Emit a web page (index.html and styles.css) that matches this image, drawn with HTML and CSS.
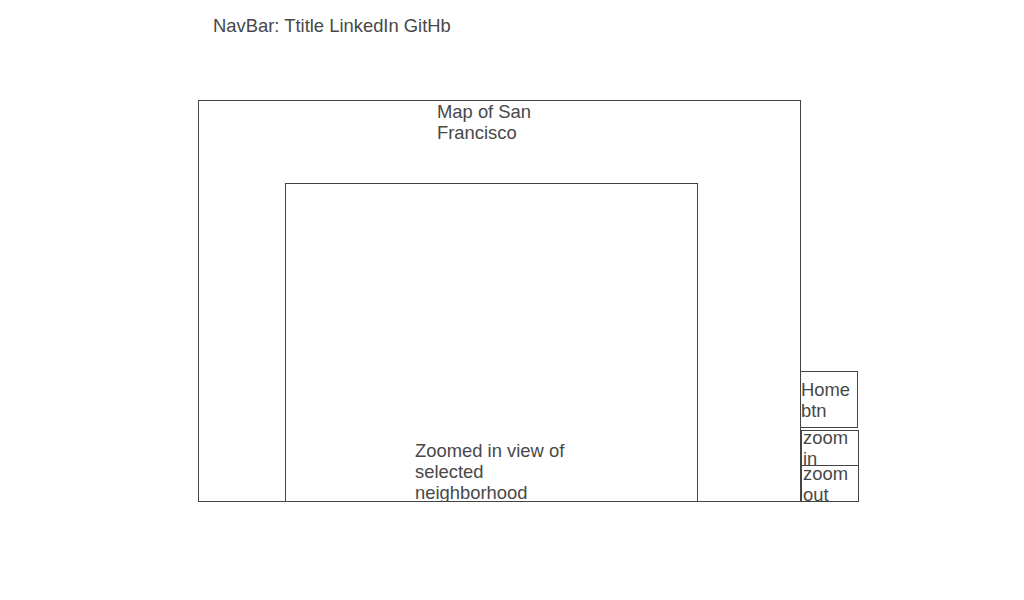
FILE: index.html
```html
<!DOCTYPE html>
<html>
<head>
<meta charset="utf-8">
<link rel="stylesheet" href="styles.css">
</head>
<body>
<div class="nav">NavBar: Ttitle LinkedIn GitHb</div>
<div class="main">
  <div class="map">
    <div class="map-title">Map of San Francisco</div>
    <div class="zoomed">
      <div class="zoomed-text">Zoomed in view of selected neighborhood</div>
    </div>
  </div>
  <div class="controls">
    <div class="btn home">Home btn</div>
    <div class="btn zin">zoom in</div>
    <div class="btn zout">zoom out</div>
  </div>
</div>
</body>
</html>
```
FILE: styles.css
```css
html, body {
  margin: 0;
  padding: 0;
  background: #fff;
}
body {
  font-family: "Liberation Sans", Arial, sans-serif;
  font-size: 18.4px;
  line-height: 21px;
  color: #484848;
}
.nav {
  padding: 15px 0 0 213px;
  height: 21px;
  margin-bottom: 64px;
}
.main {
  display: flex;
  padding-left: 198px;
}
.map {
  box-sizing: border-box;
  width: 603px;
  height: 402px;
  border: 1px solid #444;
}
.map-title {
  margin-left: 238px;
  width: 120px;
}
.zoomed {
  box-sizing: border-box;
  margin: 40px 0 0 86px;
  width: 413px;
  height: 319px;
  border: 1px solid #444;
}
.zoomed-text {
  margin: 256px 0 0 129px;
  width: 165px;
}
.controls {
  align-self: flex-end;
  display: flex;
  flex-direction: column;
  margin-left: -1px;
}
.btn {
  box-sizing: border-box;
  width: 58px;
  border: 1px solid #444;
  display: flex;
  align-items: center;
  padding-left: 1px;
}
.home {
  height: 57px;
  padding-left: 0;
  margin-bottom: 2px;
}
.zin {
  margin-left: 1px;
  height: 36px;
}
.zout {
  margin-left: 1px;
  height: 37px;
  margin-top: -1px;
}
```
